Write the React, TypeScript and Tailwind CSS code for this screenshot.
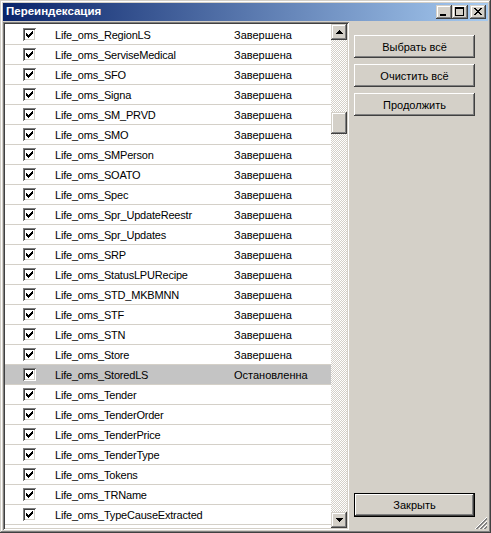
import React from "react";

const rows: { name: string; status: string; sel?: boolean }[] = [
  { name: "Life_oms_RegionLS", status: "Завершена" },
  { name: "Life_oms_ServiseMedical", status: "Завершена" },
  { name: "Life_oms_SFO", status: "Завершена" },
  { name: "Life_oms_Signa", status: "Завершена" },
  { name: "Life_oms_SM_PRVD", status: "Завершена" },
  { name: "Life_oms_SMO", status: "Завершена" },
  { name: "Life_oms_SMPerson", status: "Завершена" },
  { name: "Life_oms_SOATO", status: "Завершена" },
  { name: "Life_oms_Spec", status: "Завершена" },
  { name: "Life_oms_Spr_UpdateReestr", status: "Завершена" },
  { name: "Life_oms_Spr_Updates", status: "Завершена" },
  { name: "Life_oms_SRP", status: "Завершена" },
  { name: "Life_oms_StatusLPURecipe", status: "Завершена" },
  { name: "Life_oms_STD_MKBMNN", status: "Завершена" },
  { name: "Life_oms_STF", status: "Завершена" },
  { name: "Life_oms_STN", status: "Завершена" },
  { name: "Life_oms_Store", status: "Завершена" },
  { name: "Life_oms_StoredLS", status: "Остановленна", sel: true },
  { name: "Life_oms_Tender", status: "" },
  { name: "Life_oms_TenderOrder", status: "" },
  { name: "Life_oms_TenderPrice", status: "" },
  { name: "Life_oms_TenderType", status: "" },
  { name: "Life_oms_Tokens", status: "" },
  { name: "Life_oms_TRName", status: "" },
  { name: "Life_oms_TypeCauseExtracted", status: "" },
  { name: "", status: "" },
];

const raised =
  "bg-[#d4d0c8] shadow-[inset_-1px_-1px_#404040,inset_1px_1px_#d4d0c8,inset_-2px_-2px_#808080,inset_2px_2px_#ffffff]";
const btnRaised =
  "bg-[#d4d0c8] shadow-[inset_-1px_-1px_#404040,inset_1px_1px_#ffffff,inset_-2px_-2px_#808080,inset_2px_2px_#d4d0c8]";

function Check() {
  const px = [
    [6, 0], [5, 1], [6, 1], [0, 2], [4, 2], [5, 2], [6, 2],
    [0, 3], [1, 3], [3, 3], [4, 3], [5, 3],
    [0, 4], [1, 4], [2, 4], [3, 4], [4, 4],
    [1, 5], [2, 5], [3, 5], [2, 6],
  ];
  return (
    <div className="w-[13px] h-[13px] bg-white shadow-[inset_1px_1px_#808080,inset_-1px_-1px_#ffffff,inset_2px_2px_#404040,inset_-2px_-2px_#d4d0c8] flex items-center justify-center shrink-0">
      <svg width="7" height="7" viewBox="0 0 7 7" shapeRendering="crispEdges">
        {px.map(([x, y], i) => (
          <rect key={i} x={x} y={y} width="1" height="1" fill="#000" />
        ))}
      </svg>
    </div>
  );
}

function Btn({ label, def }: { label: string; def?: boolean }) {
  return (
    <div
      className={
        def
          ? "w-[121px] h-[24px] border border-black"
          : "w-[121px] h-[23px]"
      }
    >
      <div
        className={`${btnRaised} w-full h-full flex items-center justify-center text-[11px] text-black pt-[1px]`}
      >
        {label}
      </div>
    </div>
  );
}

export default function App() {
  return (
    <div className="font-['Liberation_Sans',Arial,sans-serif] w-[491px] h-[533px] relative bg-[#d4d0c8] shadow-[inset_-1px_-1px_#404040,inset_1px_1px_#d4d0c8,inset_-2px_-2px_#808080,inset_2px_2px_#ffffff] p-[3px] flex flex-col overflow-hidden">
      {/* Title bar */}
      <div className="h-[18px] shrink-0 bg-[linear-gradient(to_right,#0a246a,#a6caf0)] flex items-center pl-[3px] pr-[2px]">
        <div className="text-white font-bold text-[11.5px] flex-1 leading-none">
          Переиндексация
        </div>
        <div className="flex items-center">
          <div className={`${raised} w-[16px] h-[14px] relative`}>
            <svg width="16" height="14" className="absolute inset-0" shapeRendering="crispEdges">
              <rect x="4" y="9" width="6" height="2" fill="#000" />
            </svg>
          </div>
          <div className={`${raised} w-[16px] h-[14px] relative`}>
            <svg width="16" height="14" className="absolute inset-0" shapeRendering="crispEdges">
              <rect x="3" y="2" width="9" height="2" fill="#000" />
              <rect x="3" y="2" width="1" height="9" fill="#000" />
              <rect x="11" y="2" width="1" height="9" fill="#000" />
              <rect x="3" y="10" width="9" height="1" fill="#000" />
            </svg>
          </div>
          <div className={`${raised} w-[16px] h-[14px] relative ml-[2px]`}>
            <svg width="16" height="14" className="absolute inset-0" shapeRendering="crispEdges">
              {[0, 1, 2, 3, 4, 5, 6].map((i) => (
                <React.Fragment key={i}>
                  <rect x={4 + i} y={3 + i} width="2" height="1" fill="#000" />
                  <rect x={10 - i} y={3 + i} width="2" height="1" fill="#000" />
                </React.Fragment>
              ))}
            </svg>
          </div>
        </div>
      </div>

      {/* Body */}
      <div className="mt-[1px] flex-1 flex min-h-0">
        {/* List box */}
        <div className="w-[346px] h-full shrink-0 p-[2px] shadow-[inset_1px_1px_#808080,inset_-1px_-1px_#ffffff,inset_2px_2px_#404040,inset_-2px_-2px_#d4d0c8] flex">
          <div className="flex-1 bg-white overflow-hidden pt-[1px]">
            {rows.map((r, i) => (
              <div
                key={i}
                className={`h-[20px] border-b border-[#d4d0c8] flex items-center text-[11px] text-black ${
                  r.sel ? "bg-[#c4c4c4]" : ""
                }`}
              >
                <div className="w-[18px] shrink-0" />
                <Check />
                <div className="w-[19px] shrink-0" />
                <div className="w-[179px] shrink-0 whitespace-nowrap pt-[1px] tracking-[-0.2px]">
                  {r.name}
                </div>
                <div className="whitespace-nowrap pt-[1px]">{r.status}</div>
              </div>
            ))}
          </div>
          {/* Scrollbar */}
          <div className="w-[16px] shrink-0 flex flex-col bg-[repeating-conic-gradient(#ffffff_0%_25%,#d4d0c8_0%_50%)] bg-[length:2px_2px]">
            <div className={`${raised} h-[16px] shrink-0 flex items-center justify-center`}>
              <svg width="7" height="4" shapeRendering="crispEdges">
                <polygon points="3.5,0 7,4 0,4" fill="#000" />
              </svg>
            </div>
            <div className="h-[72px] shrink-0" />
            <div className={`${raised} h-[22px] shrink-0`} />
            <div className="flex-1" />
            <div className={`${raised} h-[16px] shrink-0 flex items-center justify-center`}>
              <svg width="7" height="4" shapeRendering="crispEdges">
                <polygon points="0,0 7,0 3.5,4" fill="#000" />
              </svg>
            </div>
          </div>
        </div>

        {/* Right panel */}
        <div className="flex-1 flex flex-col pl-[5px] pt-[13px] pb-[13px]">
          <div className="flex flex-col gap-[6px]">
            <Btn label="Выбрать всё" />
            <Btn label="Очистить всё" />
            <Btn label="Продолжить" />
          </div>
          <div className="flex-1" />
          <Btn label="Закрыть" def />
        </div>
      </div>

      {/* Size grip */}
      <svg
        width="12"
        height="12"
        className="absolute right-[4px] bottom-[4px]"
        shapeRendering="crispEdges"
      >
        {[0, 4, 8].map((o) => (
          <React.Fragment key={o}>
            <line x1={o} y1={12} x2={12} y2={o} stroke="#ffffff" strokeWidth="1" />
            <line x1={o + 1} y1={12} x2={12} y2={o + 1} stroke="#808080" strokeWidth="1" />
            <line x1={o + 2} y1={12} x2={12} y2={o + 2} stroke="#808080" strokeWidth="1" />
          </React.Fragment>
        ))}
      </svg>
    </div>
  );
}
